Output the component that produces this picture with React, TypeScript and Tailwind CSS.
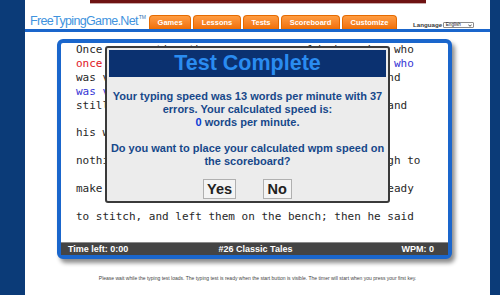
const SANS = "font-['Liberation_Sans',Arial,sans-serif]";

const BLACK = "text-[#272727]";
const RED = "text-[#e0141e]";
const BLUE = "text-[#3535d5]";

type Seg = [string, string];

const LINES: Seg[][] = [
  [["Once upon a time there was a poor old shoemaker who", BLACK]],
  [["once", RED], [" upon a time there was a poor old shoemaker who", BLUE]],
  [["was very honest and he worked hard every day, and", BLACK]],
  [["was very honest", BLUE]],
  [["still he could never earn enough to live upon, and", BLACK]],
  [],
  [["his wife and children were often hungry.", BLACK]],
  [],
  [["nothing was left in the world save leather enough to", BLACK]],
  [],
  [["make one pair of shoes. Then he cut them out, ready", BLACK]],
  [],
  [["to stitch, and left them on the bench; then he said", BLACK]],
  [],
];

const TABS = ["Games", "Lessons", "Tests", "Scoreboard", "Customize"];

export default function App() {
  return (
    <div className="flex w-[500px] h-[295px] overflow-hidden bg-[#0b3b78]">
      <div className="w-[25px] shrink-0" />
      <div className="w-[465px] shrink-0 bg-white flex flex-col">
        {/* banner edge */}
        <div className="ml-[65px] w-[336px] h-[4px] bg-[#6e1212] border-b border-[#c9a9a9]" />

        {/* header */}
        <div className="mt-[11px] h-[14px] flex items-start">
          <div className={`ml-[5px] w-[119px] shrink-0 text-[12.5px] leading-[12.5px] tracking-[-0.65px] text-[#3f93de] whitespace-nowrap ${SANS}`}>
            FreeTypingGame.Net<span className="text-[5px] align-top leading-none tracking-normal text-[#2f6fb0] ml-[1px]">TM</span>
          </div>
          <div className="flex gap-[2px]">
            {TABS.map((t) => (
              <div
                key={t}
                className={`h-[14px] px-[7.6px] rounded-t-[4px] bg-linear-to-b from-[#ff9c40] to-[#f06f00] border border-b-0 border-[#e56a00] text-white text-[7.5px] font-bold flex items-center ${SANS}`}
              >
                {t}
              </div>
            ))}
          </div>
          <div className={`ml-[16px] mt-[6.7px] flex items-center gap-[1px] ${SANS}`}>
            <span className="text-[6.2px] leading-none font-bold text-[#3a3a3a]">Language</span>
            <span className="w-[31px] h-[6.8px] border border-[#8c8c8c] rounded-[1px] bg-white flex items-center justify-between px-[1.5px]">
              <span className="text-[4.6px] leading-none text-[#222]">English</span>
              <svg width="4" height="3" viewBox="0 0 4 3">
                <path d="M0.4 0.6 L2 2.3 L3.6 0.6" fill="none" stroke="#222" strokeWidth="0.8" />
              </svg>
            </span>
          </div>
        </div>
        <div className="h-[3px] bg-[#1a66cc]" />

        {/* typing panel */}
        <div className="relative mt-[7px] ml-[32px] w-[395px] h-[220px] shrink-0 border-4 border-[#1a66cc] rounded-[6px] bg-white shadow-[3px_4px_4px_rgba(0,0,0,0.45)] flex flex-col">
          <div className="flex-1 pl-[15px] font-['DejaVu_Sans_Mono',monospace] text-[11px] leading-[13.9px] whitespace-pre">
            {LINES.map((line, i) => (
              <div key={i} className="h-[13.9px]">
                {line.map(([text, color], j) => (
                  <span key={j} className={color}>{text}</span>
                ))}
              </div>
            ))}
          </div>
          <div className={`h-[13px] bg-[#444444] border-t border-[#8a8a8a] grid grid-cols-3 items-center text-white text-[9px] font-bold leading-none ${SANS}`}>
            <span className="pl-[7px]">Time left: 0:00</span>
            <span className="text-center pl-[2px]">#26 Classic Tales</span>
            <span className="text-right pr-[14px]">WPM: 0</span>
          </div>

          {/* result dialog */}
          <div className={`absolute left-[44px] top-[3px] w-[285px] border-2 border-[#3a3a3a] rounded-[3px] bg-[#ececec] p-[2px] ${SANS}`}>
            <div className="h-[27px] bg-[#0b3170] flex items-center justify-center">
              <span className="text-[21.5px] leading-none font-bold text-[#2a8cf0]">Test Complete</span>
            </div>
            <div className="pt-[13px] text-center text-[11px] leading-[13px] font-bold text-[#17488a] whitespace-nowrap">
              <div>Your typing speed was 13 words per minute with 37</div>
              <div>errors. Your calculated speed is:</div>
              <div><span className="text-[#0a3ad6]">0</span> words per minute.</div>
              <div className="h-[13px]" />
              <div>Do you want to place your calculated wpm speed on</div>
              <div>the scoreboard?</div>
            </div>
            <div className="mt-[11px] flex justify-center gap-[26.5px]">
              <button className="h-[20px] px-[3px] border border-[#b0b0b0] bg-[#f4f4f4] text-[14.5px] leading-none font-bold text-[#222]">Yes</button>
              <button className="h-[20px] px-[4px] border border-[#b0b0b0] bg-[#f4f4f4] text-[14.5px] leading-none font-bold text-[#222]">No</button>
            </div>
          </div>
        </div>

        <p className={`mt-[16px] text-center text-[5px] leading-[6px] text-[#444] whitespace-nowrap ${SANS}`}>
          Please wait while the typing test loads. The typing test is ready when the start button is visible. The timer will start when you press your first key.
        </p>
      </div>
    </div>
  );
}
